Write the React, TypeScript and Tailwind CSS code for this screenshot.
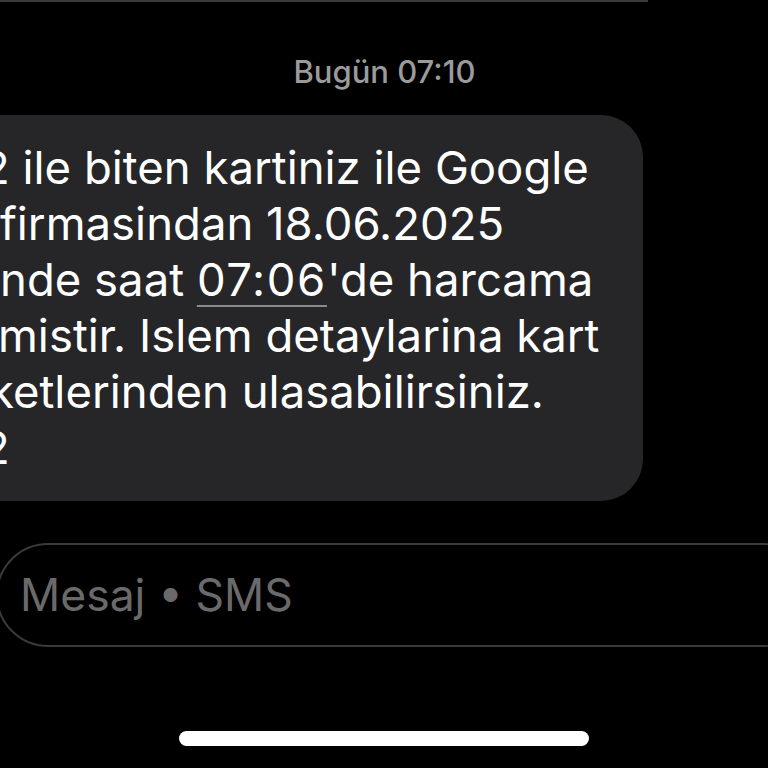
import React from "react";

const lines: { text: React.ReactNode; ml: number }[] = [
  { text: "2 ile biten kartiniz ile Google", ml: -18 },
  { text: "firmasindan 18.06.2025", ml: 0 },
  {
    text: (
      <>
        nde saat{" "}
        <span className="underline decoration-[#8a8a8a] decoration-2 underline-offset-[9px] tracking-[1.6px]">07:06</span>
        'de harcama
      </>
    ),
    ml: 0,
  },
  { text: "mistir. Islem detaylarina kart", ml: -2 },
  { text: "ketlerinden ulasabilirsiniz.", ml: -11 },
  { text: "2", ml: -18 },
];

export default function App() {
  return (
    <div
      className="w-[768px] h-[768px] bg-black overflow-hidden relative flex flex-col"
      style={{ fontFamily: "Inter, 'Noto Sans', sans-serif" }}
    >
      <div className="h-[2px] w-[648px] bg-[#3a3a3a]" />
      <div className="mt-[52px] h-[36px] flex items-center justify-center">
        <span className="text-[31px] font-medium text-[#9b9b9b] ml-[1px]">Bugün 07:10</span>
      </div>
      <div className="mt-[25px] ml-[-60px] w-[703px] h-[386px] bg-[#262628] rounded-[42px] pt-[25px] pl-[60px]">
        {lines.map((l, i) => (
          <div
            key={i}
            className="whitespace-nowrap text-white text-[45.5px] leading-[56px]"
            style={{ marginLeft: l.ml }}
          >
            {l.text}
          </div>
        ))}
      </div>
      <div className="mt-[42px] ml-[-4px] w-[820px] h-[104px] border-2 border-[#3a3a3a] rounded-[52px] flex items-center pl-[22px]">
        <span className="text-[44.5px] text-[#6a6a6a]">Mesaj • SMS</span>
      </div>
      <div className="flex-1" />
      <div className="flex justify-center mb-[22px]">
        <div className="w-[410px] h-[15px] rounded-full bg-white" />
      </div>
    </div>
  );
}
